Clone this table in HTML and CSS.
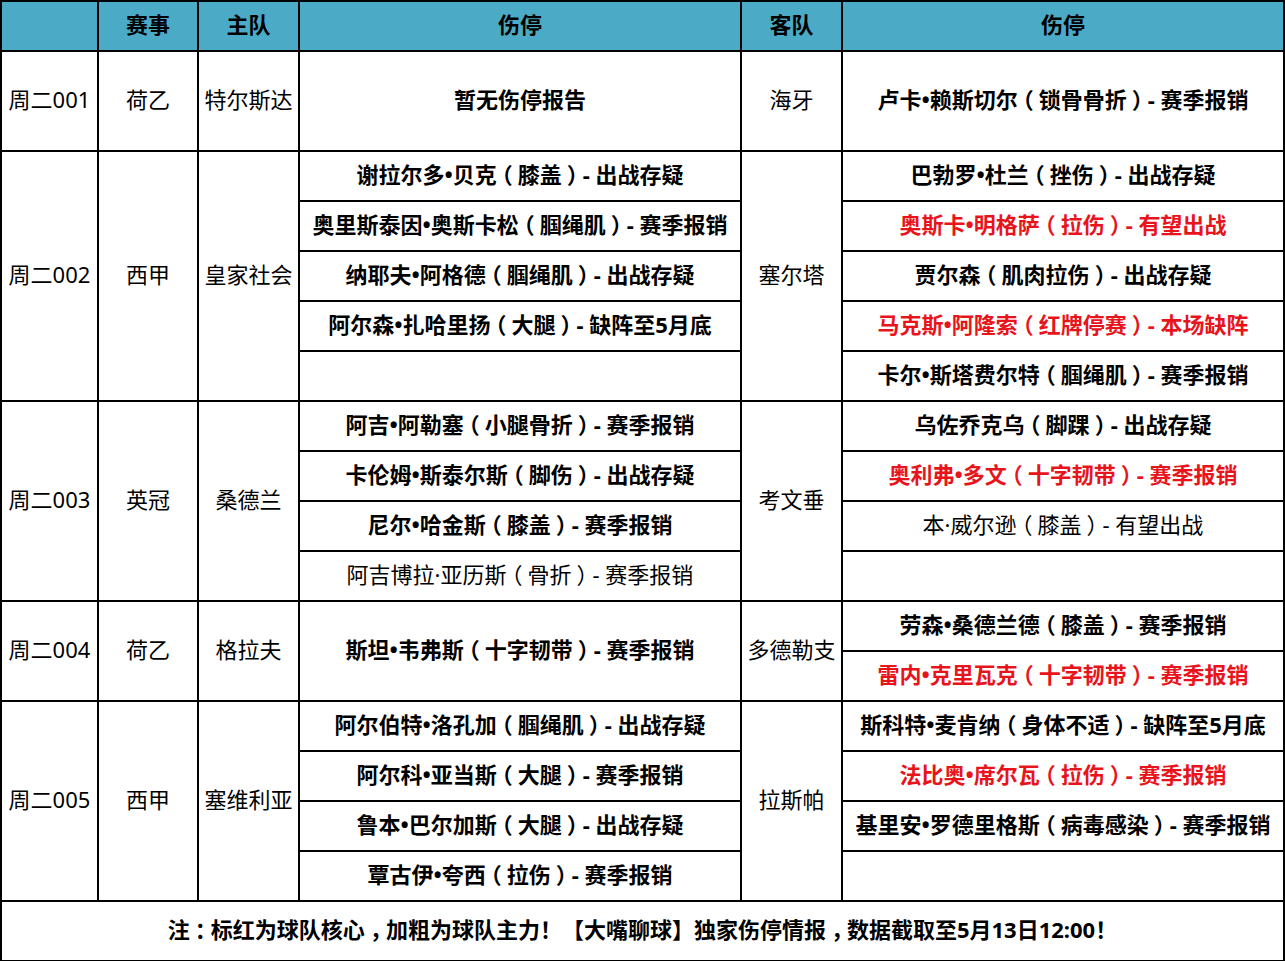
FILE: index.html
```html
<!DOCTYPE html>
<html lang="zh-CN">
<head>
<meta charset="utf-8">
<title>伤停</title>
<link rel="stylesheet" href="styles.css">
</head>
<body>
<table class="grid">
  <colgroup>
    <col class="c-no"><col class="c-lg"><col class="c-tm"><col class="c-inj"><col class="c-tm"><col class="c-inj">
  </colgroup>
  <thead>
    <tr class="head"><th></th><th>赛事</th><th>主队</th><th>伤停</th><th>客队</th><th>伤停</th></tr>
  </thead>
  <tbody>
    <tr class="tall">
      <td>周二001</td><td>荷乙</td><td>特尔斯达</td>
      <td class="b">暂无伤停报告</td>
      <td>海牙</td>
      <td class="b">卢卡•赖斯切尔<span class="p">（</span>锁骨骨折<span class="p">）</span>- 赛季报销</td>
    </tr>

    <tr>
      <td rowspan="5">周二002</td><td rowspan="5">西甲</td><td rowspan="5">皇家社会</td>
      <td class="b">谢拉尔多•贝克<span class="p">（</span>膝盖<span class="p">）</span>- 出战存疑</td>
      <td rowspan="5">塞尔塔</td>
      <td class="b">巴勃罗•杜兰<span class="p">（</span>挫伤<span class="p">）</span>- 出战存疑</td>
    </tr>
    <tr><td class="b">奥里斯泰因•奥斯卡松<span class="p">（</span>腘绳肌<span class="p">）</span>- 赛季报销</td><td class="b r">奥斯卡•明格萨<span class="p">（</span>拉伤<span class="p">）</span>- 有望出战</td></tr>
    <tr><td class="b">纳耶夫•阿格德<span class="p">（</span>腘绳肌<span class="p">）</span>- 出战存疑</td><td class="b">贾尔森<span class="p">（</span>肌肉拉伤<span class="p">）</span>- 出战存疑</td></tr>
    <tr><td class="b">阿尔森•扎哈里扬<span class="p">（</span>大腿<span class="p">）</span>- 缺阵至5月底</td><td class="b r">马克斯•阿隆索<span class="p">（</span>红牌停赛<span class="p">）</span>- 本场缺阵</td></tr>
    <tr><td></td><td class="b">卡尔•斯塔费尔特<span class="p">（</span>腘绳肌<span class="p">）</span>- 赛季报销</td></tr>

    <tr>
      <td rowspan="4">周二003</td><td rowspan="4">英冠</td><td rowspan="4">桑德兰</td>
      <td class="b">阿吉•阿勒塞<span class="p">（</span>小腿骨折<span class="p">）</span>- 赛季报销</td>
      <td rowspan="4">考文垂</td>
      <td class="b">乌佐乔克乌<span class="p">（</span>脚踝<span class="p">）</span>- 出战存疑</td>
    </tr>
    <tr><td class="b">卡伦姆•斯泰尔斯<span class="p">（</span>脚伤<span class="p">）</span>- 出战存疑</td><td class="b r">奥利弗•多文<span class="p">（</span>十字韧带<span class="p">）</span>- 赛季报销</td></tr>
    <tr><td class="b">尼尔•哈金斯<span class="p">（</span>膝盖<span class="p">）</span>- 赛季报销</td><td>本·威尔逊<span class="p">（</span>膝盖<span class="p">）</span>- 有望出战</td></tr>
    <tr><td>阿吉博拉·亚历斯<span class="p">（</span>骨折<span class="p">）</span>- 赛季报销</td><td></td></tr>

    <tr>
      <td rowspan="2">周二004</td><td rowspan="2">荷乙</td><td rowspan="2">格拉夫</td>
      <td rowspan="2" class="b">斯坦•韦弗斯<span class="p">（</span>十字韧带<span class="p">）</span>- 赛季报销</td>
      <td rowspan="2">多德勒支</td>
      <td class="b">劳森•桑德兰德<span class="p">（</span>膝盖<span class="p">）</span>- 赛季报销</td>
    </tr>
    <tr><td class="b r">雷内•克里瓦克<span class="p">（</span>十字韧带<span class="p">）</span>- 赛季报销</td></tr>

    <tr>
      <td rowspan="4">周二005</td><td rowspan="4">西甲</td><td rowspan="4">塞维利亚</td>
      <td class="b">阿尔伯特•洛孔加<span class="p">（</span>腘绳肌<span class="p">）</span>- 出战存疑</td>
      <td rowspan="4">拉斯帕</td>
      <td class="b">斯科特•麦肯纳<span class="p">（</span>身体不适<span class="p">）</span>- 缺阵至5月底</td>
    </tr>
    <tr><td class="b">阿尔科•亚当斯<span class="p">（</span>大腿<span class="p">）</span>- 赛季报销</td><td class="b r">法比奥•席尔瓦<span class="p">（</span>拉伤<span class="p">）</span>- 赛季报销</td></tr>
    <tr><td class="b">鲁本•巴尔加斯<span class="p">（</span>大腿<span class="p">）</span>- 出战存疑</td><td class="b">基里安•罗德里格斯<span class="p">（</span>病毒感染<span class="p">）</span>- 赛季报销</td></tr>
    <tr><td class="b">覃古伊•夸西<span class="p">（</span>拉伤<span class="p">）</span>- 赛季报销</td><td></td></tr>

    <tr class="foot">
      <td colspan="6" class="b">注<span class="p">：</span>标红为球队核心<span class="p">，</span>加粗为球队主力！【大嘴聊球】独家伤停情报<span class="p">，</span>数据截取至5月13日12:00！</td>
    </tr>
  </tbody>
</table>
</body>
</html>
```

FILE: styles.css
```css
html, body {
  margin: 0;
  padding: 0;
  background: #ffffff;
}

.grid {
  border-collapse: collapse;
  table-layout: fixed;
  width: 1284px;
  font-family: "Noto Sans", "Noto Sans CJK SC", sans-serif;
  font-size: 22px;
  color: #000;
}

.c-no { width: 97px; }
.c-lg { width: 100px; }
.c-tm { width: 101px; }
.c-inj { width: 442px; }

.grid th,
.grid td {
  border: 2px solid #000;
  padding: 0 0 5px 0;
  text-align: center;
  vertical-align: middle;
  height: 43px;
  line-height: 1;
  white-space: nowrap;
  overflow: hidden;
}

.grid th {
  background: #4babc7;
  font-weight: 700;
}

.grid .tall td {
  height: 93px;
}

.grid .foot td {
  height: 53px;
}

.b {
  font-weight: 700;
}

.r {
  color: #e8141b;
}

.p {
  font-family: "Noto Sans CJK SC", sans-serif;
  font-feature-settings: "halt";
  padding: 0 5px;
}
```
